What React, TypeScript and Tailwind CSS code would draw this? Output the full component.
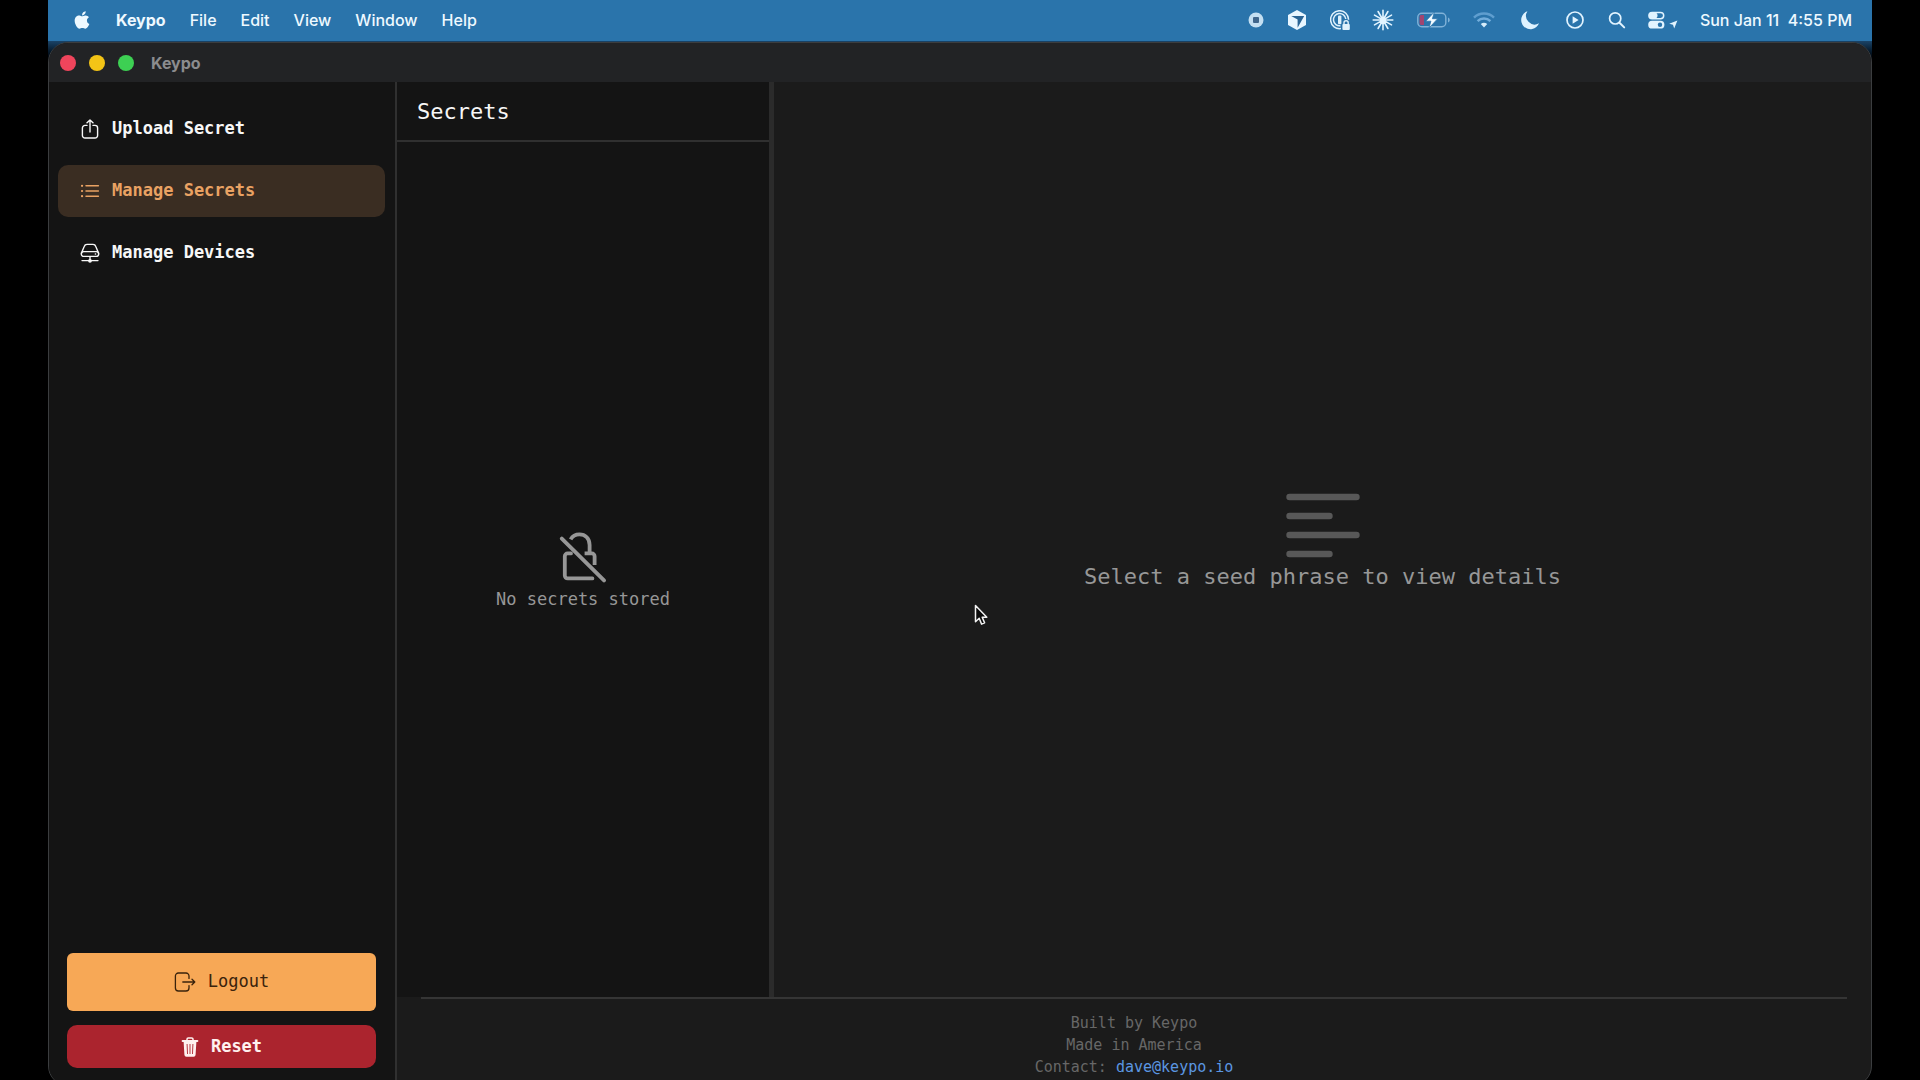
import React from "react";
import { FaApple } from "react-icons/fa";

type IconProps = { className?: string };

const RecordIcon: React.FC<IconProps> = ({ className }) => (
  <svg viewBox="0 0 16 16" className={className} fill="none" aria-hidden="true">
    <circle cx="8" cy="8" r="7.5" fill="#c3dff2" />
    <rect x="5" y="5" width="6" height="6" rx="1" fill="#3f668c" />
  </svg>
);

const CubeIcon: React.FC<IconProps> = ({ className }) => (
  <svg viewBox="0 0 22 22" className={className} aria-hidden="true">
    <path d="M11 1l9 5v10l-9 5-9-5V6z" fill="#e8f6ff" />
    <path d="M5.2 6.9h13L11.6 18.8v-8.2z" fill="#2a6494" />
  </svg>
);

const PasswordIcon: React.FC<IconProps> = ({ className }) => (
  <svg viewBox="0 0 20 20" className={className} fill="none" aria-hidden="true">
    <path d="M18.6 9.8A9 9 0 1 0 11 18.6" stroke="#dff1fc" strokeWidth="1.5" />
    <path d="M15.8 9A6.2 6.2 0 1 0 10.5 15.8" stroke="#dff1fc" strokeWidth="1.5" />
    <rect x="8" y="5.6" width="3.4" height="8.6" rx="1" fill="#dff1fc" />
    <rect x="12.4" y="14" width="7.4" height="6" rx="1" fill="#dff1fc" />
    <path d="M14 14.4v-1.6a2.1 2.1 0 0 1 4.2 0v1.6" stroke="#dff1fc" strokeWidth="1.4" />
  </svg>
);

const BurstIcon: React.FC<IconProps> = ({ className }) => (
  <svg viewBox="0 0 22 22" className={className} fill="none" stroke="#e2f4ff" strokeWidth="1.6" strokeLinecap="round" aria-hidden="true">
    <path d="M11 1.2v19.6M1.2 11h19.6M6.1 2.5l9.8 17M15.9 2.5l-9.8 17M2.5 6.1l17 9.8M19.5 6.1l-17 9.8" />
  </svg>
);

const BatteryIcon: React.FC<IconProps> = ({ className }) => (
  <svg viewBox="0 0 34 18" className={className} fill="none" aria-hidden="true">
    <rect x="1.8" y="2.2" width="28" height="13.6" rx="4" stroke="#80b2d8" strokeWidth="1.4" />
    <path d="M32 6.5c2.3.7 2.3 4.3 0 5z" fill="#80b2d8" />
    <path d="M5.2 4H8v10H5.2A1.7 1.7 0 0 1 3.6 12.3V5.7A1.7 1.7 0 0 1 5.2 4z" fill="#a14571" />
    <path d="M18.5.8l-8.8 9.4h5.2l-2 7 8.8-9.5h-5.3z" fill="#f3fbff" stroke="#2a74ac" strokeWidth=".8" />
  </svg>
);

const WifiIcon: React.FC<IconProps> = ({ className }) => (
  <svg viewBox="0 0 24 18" className={className} fill="none" aria-hidden="true">
    <path d="M2 6.6a14.2 14.2 0 0 1 20 0" stroke="#5f9ecf" strokeWidth="2.4" />
    <path d="M5.6 10.2a9 9 0 0 1 12.8 0" stroke="#72addb" strokeWidth="2.4" />
    <path d="M8.8 13.1a4.8 4.8 0 0 1 6.4 0L12 16.6z" fill="#d6ecfa" />
  </svg>
);

const MoonIcon: React.FC<IconProps> = ({ className }) => (
  <svg viewBox="0 0 24 20" className={className} fill="#dff3ff" aria-hidden="true">
    <path d="M9.4 1.3A9.2 9.2 0 1 0 21 13.3 8.6 8.6 0 0 1 9.4 1.3z" />
  </svg>
);

const PlayIcon: React.FC<IconProps> = ({ className }) => (
  <svg viewBox="0 0 22 20" className={className} fill="none" aria-hidden="true">
    <circle cx="11" cy="10" r="8" stroke="#e2f4ff" strokeWidth="1.7" />
    <path d="M8.6 6.3v7.4l6-3.7z" fill="#e2f4ff" />
  </svg>
);

const SearchIcon: React.FC<IconProps> = ({ className }) => (
  <svg viewBox="0 0 18 18" className={className} fill="none" stroke="#e2f4ff" strokeLinecap="round" aria-hidden="true">
    <circle cx="7.2" cy="7.4" r="5.6" strokeWidth="1.7" />
    <path d="M11.5 11.7l4.7 4.7" strokeWidth="2" />
  </svg>
);

const ControlIcon: React.FC<IconProps> = ({ className }) => (
  <svg viewBox="0 0 30 20" className={className} fill="none" aria-hidden="true">
    <rect x=".9" y="2.4" width="14.8" height="6.4" rx="3.2" stroke="#e2f4ff" strokeWidth="1.5" />
    <rect x="1" y="2.5" width="8.5" height="6.2" rx="3.1" fill="#e2f4ff" />
    <rect x=".2" y="10.8" width="16.2" height="7.8" rx="3.9" fill="#e2f4ff" />
    <circle cx="12" cy="14.7" r="2.2" fill="#2a74ac" />
    <path d="M29.4 10.6l-3.2 8-1.2-3.8-3.8-1.1z" fill="#e2f4ff" />
  </svg>
);

const UploadIcon: React.FC<IconProps> = ({ className }) => (
  <svg viewBox="0 0 20 20" className={className} fill="none" stroke="currentColor" strokeWidth="1.4" strokeLinecap="round" strokeLinejoin="round" aria-hidden="true">
    <path d="M7 6.4H5A2.6 2.6 0 0 0 2.4 9v7.4A2.6 2.6 0 0 0 5 19h10a2.6 2.6 0 0 0 2.6-2.6V9A2.6 2.6 0 0 0 15 6.4h-2" />
    <path d="M10 13V1M7 3.8L10 .9l3 2.9" />
  </svg>
);

const ListIcon: React.FC<IconProps> = ({ className }) => (
  <svg viewBox="0 0 20 20" className={className} fill="none" stroke="currentColor" strokeWidth="1.5" strokeLinecap="round" aria-hidden="true">
    <path d="M6 4.8h12.4M6 10h12.4M6 15.2h12.4" />
    <path d="M2 4.8h.1M2 10h.1M2 15.2h.1" strokeWidth="2.2" />
  </svg>
);

const DriveIcon: React.FC<IconProps> = ({ className }) => (
  <svg viewBox="0 0 20 20" className={className} fill="none" stroke="currentColor" strokeWidth="1.4" strokeLinecap="round" strokeLinejoin="round" aria-hidden="true">
    <path d="M1.4 10.2L4.2 3.4Q4.9 1.4 7 1.4h6q2.1 0 2.8 2l2.8 6.8" />
    <rect x="1.3" y="8.6" width="17.4" height="4.8" rx="2.4" />
    <path d="M10 13.6v3.6M2 17.6h16" />
    <circle cx="10" cy="17.8" r="1.2" fill="currentColor" />
    <path d="M15.4 11h.1" strokeWidth="1.6" />
  </svg>
);

const LogoutIcon: React.FC<IconProps> = ({ className }) => (
  <svg viewBox="0 0 22 20" className={className} fill="none" stroke="currentColor" strokeWidth="1.3" strokeLinecap="round" strokeLinejoin="round" aria-hidden="true">
    <path d="M15 6.4V4a3 3 0 0 0-3-3H4.4a3 3 0 0 0-3 3v12a3 3 0 0 0 3 3H12a3 3 0 0 0 3-3v-2.4" />
    <path d="M8.8 10h12M18 7.2l2.8 2.8-2.8 2.8" />
  </svg>
);

const TrashIcon: React.FC<IconProps> = ({ className }) => (
  <svg viewBox="0 0 18 20" className={className} fill="none" aria-hidden="true">
    <path d="M6 3V2.2A1.3 1.3 0 0 1 7.3.9h3.4A1.3 1.3 0 0 1 12 2.2V3" stroke="currentColor" strokeWidth="1.5" />
    <path d="M1.6 4h14.8" stroke="currentColor" strokeWidth="1.9" strokeLinecap="round" />
    <path d="M2.6 4.6h12.8l-.8 13.2a2 2 0 0 1-2 1.9H5.4a2 2 0 0 1-2-1.9z" fill="currentColor" />
    <path d="M6.1 7.4l.4 9.2M9 7.4v9.2M11.9 7.4l-.4 9.2" stroke="#ab242e" strokeWidth=".9" strokeLinecap="round" />
  </svg>
);

const LockSlashIcon: React.FC<IconProps> = ({ className }) => (
  <svg viewBox="0 0 48 52" className={className} fill="none" stroke="currentColor" strokeWidth="3.8" strokeLinecap="round" strokeLinejoin="round" aria-hidden="true">
    <path d="M2.8 7.6L45 49.4" />
    <path d="M11.6 8.4C13.6 5 16.8 3.4 20.4 3.4c6 0 10.2 4.2 10.2 10.6v8.4" strokeLinecap="butt" />
    <path d="M25.6 22.4h7.2a2.8 2.8 0 0 1 2.8 2.8V34" strokeLinecap="butt" />
    <path d="M12 22.4H8.6a2.8 2.8 0 0 0-2.8 2.8v19.4a2.8 2.8 0 0 0 2.8 2.8h24.8" />
  </svg>
);

const LinesIcon: React.FC<IconProps> = ({ className }) => (
  <svg viewBox="0 0 76 66" className={className} stroke="currentColor" strokeWidth="6.4" strokeLinecap="round" aria-hidden="true">
    <path d="M4.5 4h67M4.5 23h40M4.5 42h67M4.5 61h40" />
  </svg>
);

const menus = ["File", "Edit", "View", "Window", "Help"];

const navItems = [
  { label: "Upload Secret", Icon: UploadIcon, active: false },
  { label: "Manage Secrets", Icon: ListIcon, active: true },
  { label: "Manage Devices", Icon: DriveIcon, active: false },
];

const MenuBar: React.FC = () => (
  <header className="flex h-[41px] shrink-0 items-center justify-between bg-[#2a74ab] pr-5 pb-0.5 pl-6 font-[Inter,sans-serif] text-base font-medium text-[#eef9ff]">
    <nav className="flex items-center gap-6" aria-label="Menu bar">
      <button type="button" aria-label="Apple menu">
        <FaApple className="size-5" />
      </button>
      <button type="button" className="font-bold">Keypo</button>
      {menus.map((menu) => (
        <button key={menu} type="button">{menu}</button>
      ))}
    </nav>
    <div className="flex items-center gap-[22px]">
      <RecordIcon className="w-4" />
      <CubeIcon className="w-[22px]" />
      <PasswordIcon className="w-5" />
      <BurstIcon className="w-[22px]" />
      <BatteryIcon className="w-[34px]" />
      <WifiIcon className="w-6" />
      <MoonIcon className="w-6" />
      <PlayIcon className="w-[22px]" />
      <SearchIcon className="w-[18px]" />
      <ControlIcon className="w-[30px]" />
      <time className="whitespace-pre">Sun Jan 11  4:55 PM</time>
    </div>
  </header>
);

const Sidebar: React.FC = () => (
  <aside className="flex w-[348px] shrink-0 flex-col justify-between border-r-2 border-[#303030] bg-[#141414] pt-[21px] pb-[17px] text-[17px]">
    <nav className="flex flex-col gap-[10px] pr-[10px] pl-[9px]">
      {navItems.map(({ label, Icon, active }) => (
        <button
          key={label}
          type="button"
          className={
            active
              ? "flex h-[52px] items-center gap-3 rounded-[10px] bg-[#3a2d22] px-[22px] font-bold text-[#e9a263]"
              : "flex h-[52px] items-center gap-3 rounded-[10px] px-[22px] font-bold text-[#f7f7f7]"
          }
        >
          <Icon className="size-5" />
          {label}
        </button>
      ))}
    </nav>
    <div className="flex flex-col gap-[14px] pr-[19px] pl-[18px]">
      <button type="button" className="flex h-[58px] items-center justify-center gap-3 rounded-md bg-[#f7a856] text-[#3a230c]">
        <LogoutIcon className="w-[22px]" />
        Logout
      </button>
      <button type="button" className="flex h-[43px] items-center justify-center gap-3 rounded-[10px] bg-[#ab242e] font-bold text-[#fff1ef]">
        <TrashIcon className="w-[18px]" />
        Reset
      </button>
    </div>
  </aside>
);

const App: React.FC = () => {
  return (
    <div className="relative flex h-screen flex-col overflow-hidden bg-black px-12">
      <MenuBar />
      <div className="-mb-[6px] flex min-h-0 flex-1 flex-col bg-linear-to-b from-[#1b4468] to-black to-[24px] pt-px">
        <div className="flex min-h-0 flex-1 flex-col overflow-hidden rounded-[20px] border border-[#3b3d3f] bg-[#1b1b1b] font-['DejaVu_Sans_Mono',monospace]">
          <div className="flex h-[39px] shrink-0 items-center gap-[13px] bg-[#222325] px-[11px]">
            <button type="button" aria-label="Close" className="size-4 rounded-full bg-[#ef455c]" />
            <button type="button" aria-label="Minimize" className="size-4 rounded-full bg-[#f3c416]" />
            <button type="button" aria-label="Zoom" className="size-4 rounded-full bg-[#3dd053]" />
            <span className="pl-1 font-[Inter,sans-serif] text-base font-bold text-[#8b8c8e]">Keypo</span>
          </div>
          <div className="flex min-h-0 flex-1">
            <Sidebar />
            <main className="flex min-w-0 flex-1 flex-col">
              <div className="flex min-h-0 flex-1">
                <section className="flex w-[377px] shrink-0 flex-col border-r-[5px] border-[#2b2b2b] bg-[#141414]">
                  <h1 className="flex h-[60px] shrink-0 items-center border-b-2 border-[#303030] px-5 text-[22px] text-[#f7f7f7]">
                    Secrets
                  </h1>
                  <div className="flex flex-1 flex-col items-center justify-center gap-1 pt-0.5 text-[#979797]">
                    <LockSlashIcon className="w-12" />
                    <p className="text-[17px] leading-6">No secrets stored</p>
                  </div>
                </section>
                <section className="flex flex-1 flex-col items-center justify-center gap-1 pt-1 text-[#979797]">
                  <LinesIcon className="w-[76px] text-[#585858]" />
                  <p className="text-[22px] leading-7">Select a seed phrase to view details</p>
                </section>
              </div>
              <footer className="h-[88px] shrink-0 px-6">
                <div className="border-t-2 border-[#353535] pt-[13px] text-center text-[15px] leading-[22px] text-[#676767]">
                  <p>Built by Keypo</p>
                  <p>Made in America</p>
                  <p>
                    Contact:{" "}
                    <a href="mailto:dave@keypo.io" className="text-[#5b97e2]">dave@keypo.io</a>
                  </p>
                </div>
              </footer>
            </main>
          </div>
        </div>
      </div>
      {/* pointer */}
      <svg viewBox="0 0 14 22" className="absolute top-[604px] left-[974px] w-[14px]" aria-hidden="true">
        <path
          d="M1.5 1.5v16.2l3.7-3.4 2.4 5.8 3-1.2-2.4-5.7h4.6z"
          fill="#0a0a0a"
          stroke="#f2f2f2"
          strokeWidth="1.5"
          strokeLinejoin="round"
        />
      </svg>
    </div>
  );
};

export default App;
